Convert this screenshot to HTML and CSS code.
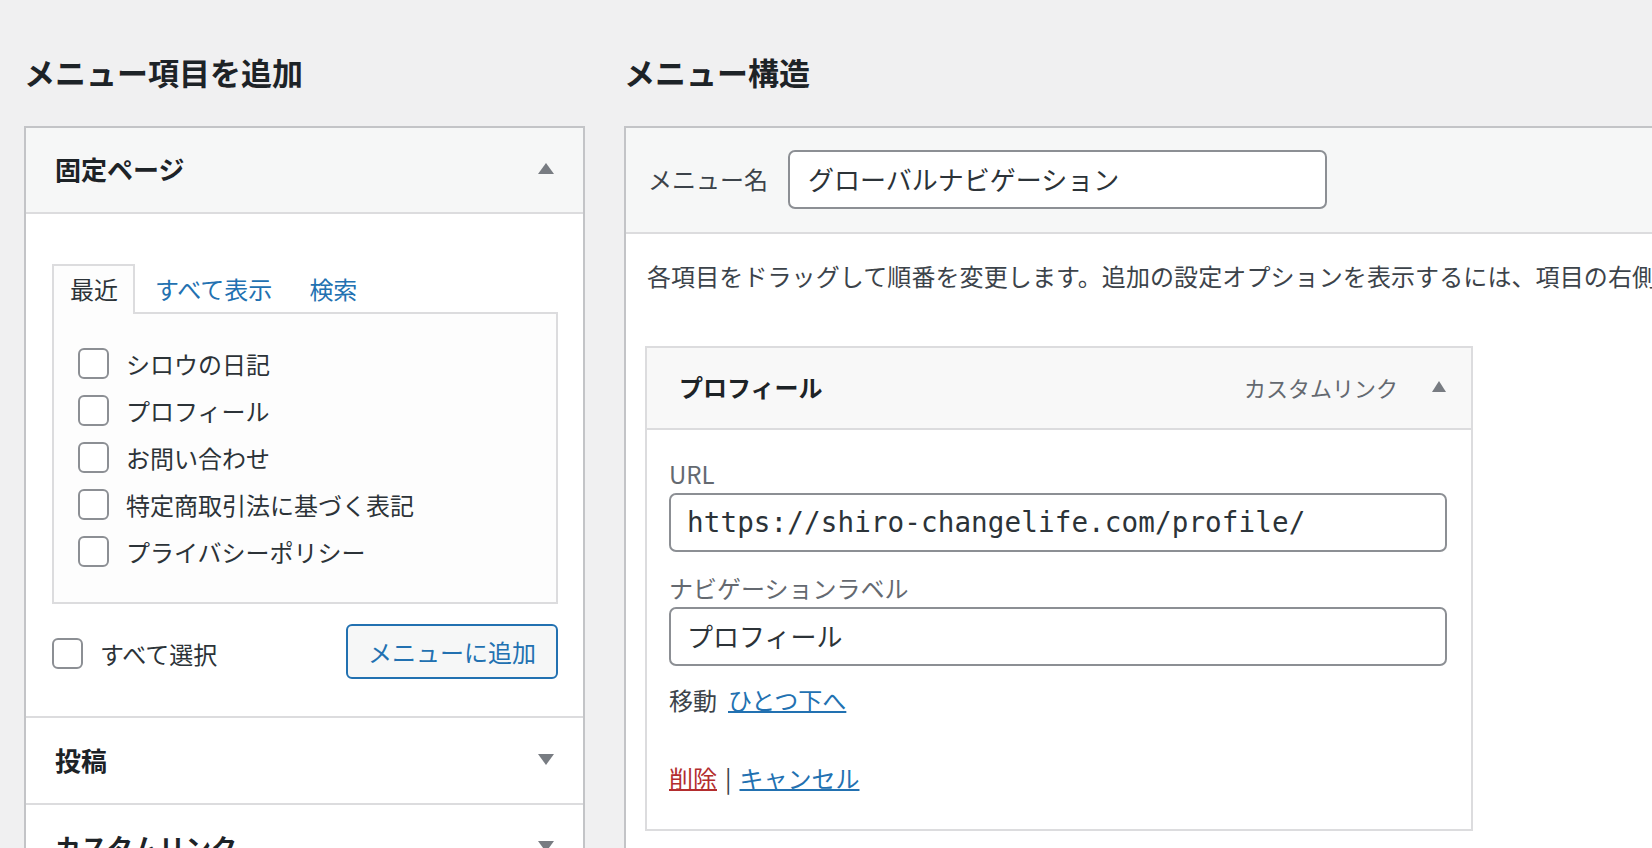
FILE: index.html
```html
<!DOCTYPE html>
<html lang="ja">
<head>
<meta charset="utf-8">
<title>メニュー</title>
<link rel="stylesheet" href="styles.css">
</head>
<body>
<div class="page">
  <div class="col-left">
    <h2 class="col-title">メニュー項目を追加</h2>
    <div class="acc">
      <div class="acc-sec">
        <div class="acc-head open"><span>固定ページ</span><span class="tri tri-up"></span></div>
        <div class="acc-body">
          <ul class="tabs">
            <li class="tab active">最近</li>
            <li class="tab"><a href="#">すべて表示</a></li>
            <li class="tab"><a href="#">検索</a></li>
          </ul>
          <div class="panel">
            <label class="cb-row"><span class="cb"></span><span>シロウの日記</span></label>
            <label class="cb-row"><span class="cb"></span><span>プロフィール</span></label>
            <label class="cb-row"><span class="cb"></span><span>お問い合わせ</span></label>
            <label class="cb-row"><span class="cb"></span><span>特定商取引法に基づく表記</span></label>
            <label class="cb-row"><span class="cb"></span><span>プライバシーポリシー</span></label>
          </div>
          <div class="actions">
            <label class="cb-row select-all"><span class="cb"></span><span>すべて選択</span></label>
            <button class="btn" type="button">メニューに追加</button>
          </div>
        </div>
      </div>
      <div class="acc-sec">
        <div class="acc-head"><span>投稿</span><span class="tri tri-down"></span></div>
      </div>
      <div class="acc-sec">
        <div class="acc-head"><span>カスタムリンク</span><span class="tri tri-down"></span></div>
      </div>
    </div>
  </div>

  <div class="col-right">
    <h2 class="col-title">メニュー構造</h2>
    <div class="mm-box">
      <div class="mm-header">
        <label class="mm-label">メニュー名</label>
        <div class="input name-input">グローバルナビゲーション</div>
      </div>
      <div class="mm-body">
        <p class="instructions">各項目をドラッグして順番を変更します。追加の設定オプションを表示するには、項目の右側の矢印をクリックしてください。</p>
        <div class="item">
          <div class="item-head">
            <span class="item-title">プロフィール</span>
            <span class="item-controls"><span class="item-type">カスタムリンク</span><span class="tri tri-up small"></span></span>
          </div>
          <div class="item-body">
            <div class="field">
              <div class="field-label">URL</div>
              <div class="input url-input">https://shiro-changelife.com/profile/</div>
            </div>
            <div class="field">
              <div class="field-label">ナビゲーションラベル</div>
              <div class="input label-input">プロフィール</div>
            </div>
            <div class="move">移動<a href="#" class="link">ひとつ下へ</a></div>
            <div class="item-actions"><a href="#" class="delete">削除</a><span class="sep">|</span><a href="#" class="link">キャンセル</a></div>
          </div>
        </div>
      </div>
    </div>
  </div>
</div>
</body>
</html>
```

FILE: styles.css
```css
html, body {
  margin: 0;
  padding: 0;
  height: 848px;
  overflow: hidden;
  background: #f0f0f1;
}

body {
  font-family: "Noto Sans CJK JP", "Noto Sans", sans-serif;
  font-size: 24px;
  color: #3c434a;
}

a {
  color: #2271b1;
}

.page {
  display: flex;
  gap: 39px;
  padding: 52px 0 0 24px;
  align-items: flex-start;
}

.col-left {
  flex: none;
  width: 561px;
}

.col-right {
  flex: none;
  width: 1120px;
}

.col-title {
  margin: 0 0 34px 0;
  font-size: 31px;
  line-height: 40px;
  font-weight: 700;
  color: #1d2327;
}

/* Left accordion */
.acc {
  border: 2px solid #c3c4c7;
  border-bottom: none;
  background: #fff;
}

.acc-sec {
  border-bottom: 2px solid #dcdcde;
}

.acc-head {
  box-sizing: border-box;
  height: 85px;
  display: flex;
  align-items: center;
  justify-content: space-between;
  padding: 0 29px 2px 29px;
  font-size: 26px;
  font-weight: 700;
  color: #1d2327;
  background: #fff;
}

.acc-head.open {
  height: 86px;
  padding-bottom: 3px;
  background: #f6f7f7;
  border-bottom: 2px solid #dcdcde;
}

.tri {
  width: 0;
  height: 0;
  border-left: 8px solid transparent;
  border-right: 8px solid transparent;
}

.tri-up {
  border-bottom: 11px solid #787c82;
}

.tri-down {
  border-top: 11px solid #787c82;
}

.tri.small {
  border-left-width: 7px;
  border-right-width: 7px;
}

.acc-body {
  padding: 50px 25px 37px 26px;
}

.tabs {
  display: flex;
  gap: 2px;
  margin: 0;
  padding: 0;
  list-style: none;
}

.tab {
  position: relative;
  height: 48px;
  line-height: 46px;
  padding: 0 15px 0 16px;
  border: 2px solid transparent;
  border-bottom: none;
  margin-bottom: -2px;
  z-index: 1;
}

.tab a {
  text-decoration: none;
  color: #2271b1;
}

.tab.active {
  border-color: #dcdcde;
  background: #fdfdfd;
  color: #2c3338;
}

.panel {
  border: 2px solid #dcdcde;
  background: #fdfdfd;
  padding: 26px 24px 27px 24px;
}

.cb-row {
  display: flex;
  align-items: center;
  gap: 17px;
  height: 47px;
  line-height: 45px;
  color: #2c3338;
  white-space: nowrap;
}

.cb {
  flex: none;
  width: 31px;
  height: 31px;
  box-sizing: border-box;
  border: 2px solid #8c8f94;
  border-radius: 6px;
  background: #fff;
}

.actions {
  margin-top: 20px;
  display: flex;
  justify-content: space-between;
  align-items: center;
}

.select-all {
  margin-top: 4px;
}

.btn {
  height: 55px;
  padding: 0 20px;
  border: 2px solid #2271b1;
  border-radius: 6px;
  background: #f6f7f7;
  color: #2271b1;
  font-family: inherit;
  font-size: 24px;
  line-height: 49px;
}

/* Right side */
.mm-box {
  border: 2px solid #c3c4c7;
  border-right: none;
  border-bottom: none;
  background: #fff;
  height: 760px;
}

.mm-header {
  display: flex;
  align-items: center;
  gap: 20px;
  padding: 22px 22px 23px 22px;
  background: #f6f7f7;
  border-bottom: 2px solid #dcdcde;
}

.mm-label {
  color: #3c434a;
  line-height: 36px;
  padding-bottom: 2px;
}

.input {
  box-sizing: border-box;
  height: 59px;
  border: 2px solid #8c8f94;
  border-radius: 7px;
  background: #fff;
  color: #2c3338;
  display: flex;
  align-items: center;
  white-space: nowrap;
  overflow: hidden;
}

.name-input {
  width: 539px;
  padding: 0 18px 2px 18px;
  font-size: 26px;
}

.mm-body {
  padding: 24px 0 0 21px;
}

.instructions {
  margin: 0;
  line-height: 36px;
  white-space: nowrap;
  letter-spacing: 0.1px;
  color: #3c434a;
}

.item {
  margin: 52px 0 0 -2px;
  width: 828px;
  box-sizing: border-box;
  border: 2px solid #dcdcde;
  background: #fff;
}

.item-head {
  box-sizing: border-box;
  height: 82px;
  display: flex;
  align-items: center;
  justify-content: space-between;
  padding: 0 25px 3px 32px;
  background: #f8f8f8;
  border-bottom: 2px solid #dcdcde;
}

.item-title {
  font-weight: 700;
  color: #1d2327;
}

.item-controls {
  display: flex;
  align-items: center;
  gap: 34px;
}

.item-type {
  font-size: 22px;
  color: #646970;
}

.item-body {
  padding: 25px 24px 32px 22px;
}

.field {
  margin-bottom: 17px;
}

.field-label {
  line-height: 38px;
  color: #646970;
}

.url-input,
.label-input {
  width: 100%;
  padding: 0 16px;
}

.url-input {
  font-family: "DejaVu Sans Mono", "Liberation Mono", monospace;
  font-size: 27.6px;
  letter-spacing: 0.1px;
}

.label-input {
  font-size: 26px;
  padding-bottom: 2px;
}

.move {
  margin-top: -2px;
  line-height: 38px;
  color: #3c434a;
}

.link,
.delete {
  text-decoration-thickness: 2px;
}

.move .link {
  margin-left: 11px;
}

.item-actions {
  margin-top: 40px;
  line-height: 38px;
  color: #3c434a;
}

.delete {
  color: #b32d2e;
}

.sep {
  margin: 0 8px;
}
```
